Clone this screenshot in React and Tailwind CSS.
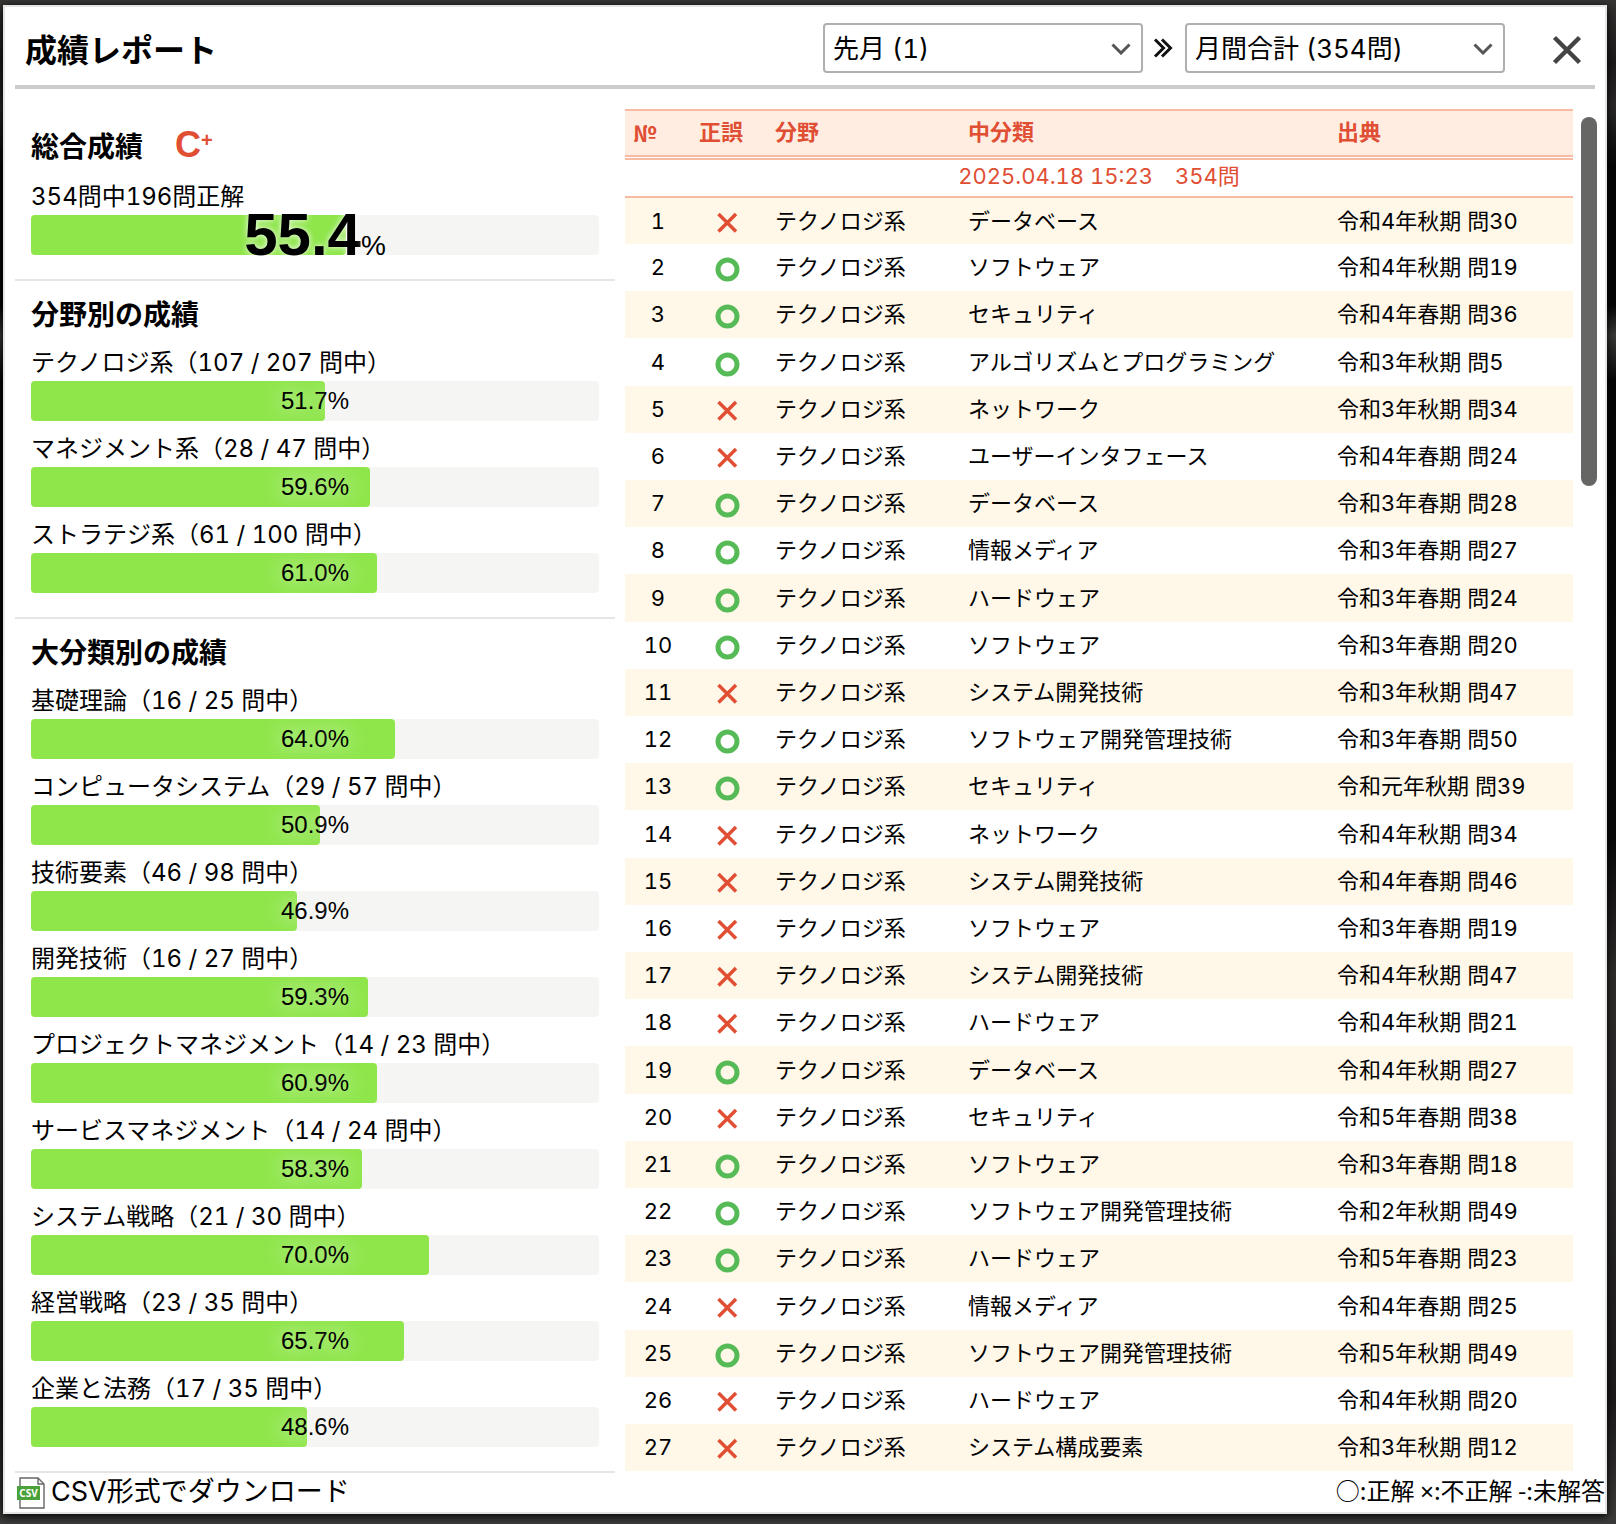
const fieldScores = [
    { name: 'テクノロジ系', correct: 107, total: 207, percent: '51.7' },
    { name: 'マネジメント系', correct: 28, total: 47, percent: '59.6' },
    { name: 'ストラテジ系', correct: 61, total: 100, percent: '61.0' },
];

const categoryScores = [
    { name: '基礎理論', correct: 16, total: 25, percent: '64.0' },
    { name: 'コンピュータシステム', correct: 29, total: 57, percent: '50.9' },
    { name: '技術要素', correct: 46, total: 98, percent: '46.9' },
    { name: '開発技術', correct: 16, total: 27, percent: '59.3' },
    { name: 'プロジェクトマネジメント', correct: 14, total: 23, percent: '60.9' },
    { name: 'サービスマネジメント', correct: 14, total: 24, percent: '58.3' },
    { name: 'システム戦略', correct: 21, total: 30, percent: '70.0' },
    { name: '経営戦略', correct: 23, total: 35, percent: '65.7' },
    { name: '企業と法務', correct: 17, total: 35, percent: '48.6' },
];

// [correct?, category, source]
const answers = [
    [false, 'データベース', '令和4年秋期 問30'],
    [true, 'ソフトウェア', '令和4年秋期 問19'],
    [true, 'セキュリティ', '令和4年春期 問36'],
    [true, 'アルゴリズムとプログラミング', '令和3年秋期 問5'],
    [false, 'ネットワーク', '令和3年秋期 問34'],
    [false, 'ユーザーインタフェース', '令和4年春期 問24'],
    [true, 'データベース', '令和3年春期 問28'],
    [true, '情報メディア', '令和3年春期 問27'],
    [true, 'ハードウェア', '令和3年春期 問24'],
    [true, 'ソフトウェア', '令和3年春期 問20'],
    [false, 'システム開発技術', '令和3年秋期 問47'],
    [true, 'ソフトウェア開発管理技術', '令和3年春期 問50'],
    [true, 'セキュリティ', '令和元年秋期 問39'],
    [false, 'ネットワーク', '令和4年秋期 問34'],
    [false, 'システム開発技術', '令和4年春期 問46'],
    [false, 'ソフトウェア', '令和3年春期 問19'],
    [false, 'システム開発技術', '令和4年秋期 問47'],
    [false, 'ハードウェア', '令和4年秋期 問21'],
    [true, 'データベース', '令和4年秋期 問27'],
    [false, 'セキュリティ', '令和5年春期 問38'],
    [true, 'ソフトウェア', '令和3年春期 問18'],
    [true, 'ソフトウェア開発管理技術', '令和2年秋期 問49'],
    [true, 'ハードウェア', '令和5年春期 問23'],
    [false, '情報メディア', '令和4年春期 問25'],
    [true, 'ソフトウェア開発管理技術', '令和5年秋期 問49'],
    [false, 'ハードウェア', '令和4年秋期 問20'],
    [false, 'システム構成要素', '令和3年秋期 問12'],
];

const Bar = ({ percent, children }) => (
    <div className="relative h-10 rounded-sm bg-[#f5f5f4]">
        <div className="h-full rounded-sm bg-[#8fe64b]" style={{ width: `${percent}%` }} />
        <div className="absolute inset-0 flex items-center justify-center">{children}</div>
    </div>
);

const ScoreSection = ({ title, scores }) => (
    <section className="border-b-2 border-[#e5e5e5] px-4 pt-4 pb-6">
        <h2 className="pb-0.5 text-[28px] leading-9 font-bold">{title}</h2>
        {scores.map((score) => (
            <div key={score.name} className="mt-2.5">
                <p className="text-2xl leading-9">{`${score.name}（${score.correct} / ${score.total} 問中）`}</p>
                <Bar percent={score.percent}>
                    <span className="font-['Liberation_Sans',sans-serif] text-2xl [text-shadow:0_0_20px_#ffffff]">{score.percent}%</span>
                </Bar>
            </div>
        ))}
    </section>
);

const SelectBox = ({ label, option }) => (
    <div className="relative w-80">
        <select aria-label={label} className="h-[50px] w-full appearance-none rounded-sm border-2 border-[#b0b0b0] bg-white pr-12 pl-2 text-[26px]">
            <option>{option}</option>
        </select>
        <svg viewBox="0 0 20 12" className="pointer-events-none absolute top-5 right-3 h-3 w-5" aria-hidden="true">
            <path d="M1.5 1.5 10 10 18.5 1.5" fill="none" stroke="#555555" strokeWidth="3" />
        </svg>
    </div>
);

const ResultMark = ({ correct }) => (
    <svg viewBox="0 0 24 24" className="mx-auto size-6 overflow-visible" role="img" aria-label={correct ? '正解' : '不正解'}>
        {correct
            ? <circle cx="11.5" cy="14.5" r="9.5" fill="none" stroke="#56bb56" strokeWidth="5" />
            : <path d="M2.5 5 20 22.5M20 5 2.5 22.5" fill="none" stroke="#e04e33" strokeWidth="3.5" />}
    </svg>
);

const CsvIcon = () => (
    <svg viewBox="0 0 28 32" className="h-8 w-7 shrink-0" aria-hidden="true">
        <path d="M3 1H21L27 7V31H3Z" fill="#ffffff" stroke="#666666" strokeWidth="1.4" />
        <path d="M21 1V7H27" fill="none" stroke="#666666" strokeWidth="1.4" />
        <rect x="0" y="9" width="23" height="14" fill="#4ba13a" />
        <text x="11.5" y="20" textAnchor="middle" fontSize="10" fontWeight="700" fontFamily="Open Sans, sans-serif" fill="#ffffff">CSV</text>
    </svg>
);

const App = () => {
    return (
        <div className="min-h-screen bg-[linear-gradient(#363534,#1c1a1a_4%,#2a2828_7%,#050505_11%,#050505_20%,#3a3a39_22%,#050505_25%,#0a0909_55%,#2e2c2b_64%,#2a2828_76%,#1c1a1a_92%,#3c3b3a)] pt-[5px] pr-[9px] pb-2.5 pl-[3px] font-[Inter,'Noto_Sans_CJK_JP',sans-serif] text-black tabular-nums">
            <div className="border-2 border-[#e5e5e5] bg-white shadow-[0_2px_8px_#000000]">
                {/* Header */}
                <header className="mx-2.5 flex h-[82px] items-center border-b-4 border-[#cccccb] pt-1 pl-2.5">
                    <h1 className="mr-auto pt-1.5 text-[32px] font-bold">成績レポート</h1>
                    <SelectBox label="期間" option="先月 (1)" />
                    <svg viewBox="0 0 42 24" className="h-6 w-[42px]" aria-hidden="true">
                        <path d="M12 3.5 20.5 12 12 20.5M19 3.5 27.5 12 19 20.5" fill="none" stroke="#111111" strokeWidth="3" />
                    </svg>
                    <SelectBox label="集計" option="月間合計 (354問)" />
                    <button type="button" aria-label="閉じる" className="mr-[13px] ml-[47px] pt-1">
                        <svg viewBox="0 0 30 30" className="size-[30px]">
                            <path d="M2.5 2.5 27.5 27.5M27.5 2.5 2.5 27.5" stroke="#444444" strokeWidth="4.5" />
                        </svg>
                    </button>
                </header>

                <div className="flex gap-2.5 pt-5 pl-2.5">
                    {/* Scores */}
                    <div className="w-[600px] shrink-0">
                        <section className="border-b-2 border-[#e5e5e5] px-4 pt-4 pb-6">
                            <h2 className="flex h-11 items-center gap-8 text-[28px] font-bold">
                                総合成績
                                <span className="pb-1 font-['Liberation_Sans',sans-serif] text-4xl text-[#e04e33]">
                                    C<sup className="text-xl">+</sup>
                                </span>
                            </h2>
                            <div className="mt-2.5">
                                <p className="text-2xl leading-9">354問中196問正解</p>
                                <Bar percent="55.4">
                                    <span className="pt-0.5 font-['Liberation_Sans',sans-serif] text-[28px] [text-shadow:0_0_6px_#ffffff]">
                                        <b className="text-6xl">55.4</b>%
                                    </span>
                                </Bar>
                            </div>
                        </section>
                        <ScoreSection title="分野別の成績" scores={fieldScores} />
                        <ScoreSection title="大分類別の成績" scores={categoryScores} />
                    </div>

                    {/* Answer history */}
                    <div className="flex grow items-start gap-2">
                        <table className="w-full table-fixed border-collapse text-[22px] leading-8">
                            <colgroup>
                                <col className="w-[66px]" />
                                <col className="w-[74px]" />
                                <col className="w-[193px]" />
                                <col className="w-[369px]" />
                                <col />
                            </colgroup>
                            <thead>
                                <tr className="h-[47px] border-t-2 border-b-[5px] border-[#f9baa3] bg-[#ffede2] text-left text-[#e04e33] [border-bottom-style:double]">
                                    <th className="px-2 pb-0.5 font-['Noto_Sans_CJK_JP',sans-serif]">№</th>
                                    <th className="px-2 pb-0.5">正誤</th>
                                    <th className="px-2.5 pb-0.5">分野</th>
                                    <th className="px-2.5 pb-0.5">中分類</th>
                                    <th className="px-2.5 pb-0.5">出典</th>
                                </tr>
                            </thead>
                            <tbody>
                                <tr className="h-[38px] border-b-2 border-[#f9baa3] text-center text-[#e04e33]">
                                    <td colSpan={5} className="pb-1">2025.04.18 15:23　354問</td>
                                </tr>
                                {answers.map(([correct, category, source], i) => (
                                    <tr key={i} className="h-[47px] even:bg-[#fff7e8] nth-[5n]:h-12">
                                        <td className="text-center">{i + 1}</td>
                                        <td><ResultMark correct={correct} /></td>
                                        <td className="px-2.5">テクノロジ系</td>
                                        <td className="px-2.5">{category}</td>
                                        <td className="px-2.5">{source}</td>
                                    </tr>
                                ))}
                            </tbody>
                        </table>
                        <div className="mt-2 mr-2 h-[369px] w-4 shrink-0 rounded-full bg-[#666664]" />
                    </div>
                </div>

                {/* Footer */}
                <footer className="flex h-[39px] items-center justify-between pl-3">
                    <a href="#csv" className="flex items-center gap-1.5 text-[27px]">
                        <CsvIcon />
                        CSV形式でダウンロード
                    </a>
                    <p className="pb-1 font-['Noto_Sans_CJK_JP',sans-serif] text-2xl">
                        ○:正解 <span className="font-['Liberation_Sans',sans-serif]">×</span>:不正解 -:未解答
                    </p>
                </footer>
            </div>
        </div>
    );
};

export default App;
